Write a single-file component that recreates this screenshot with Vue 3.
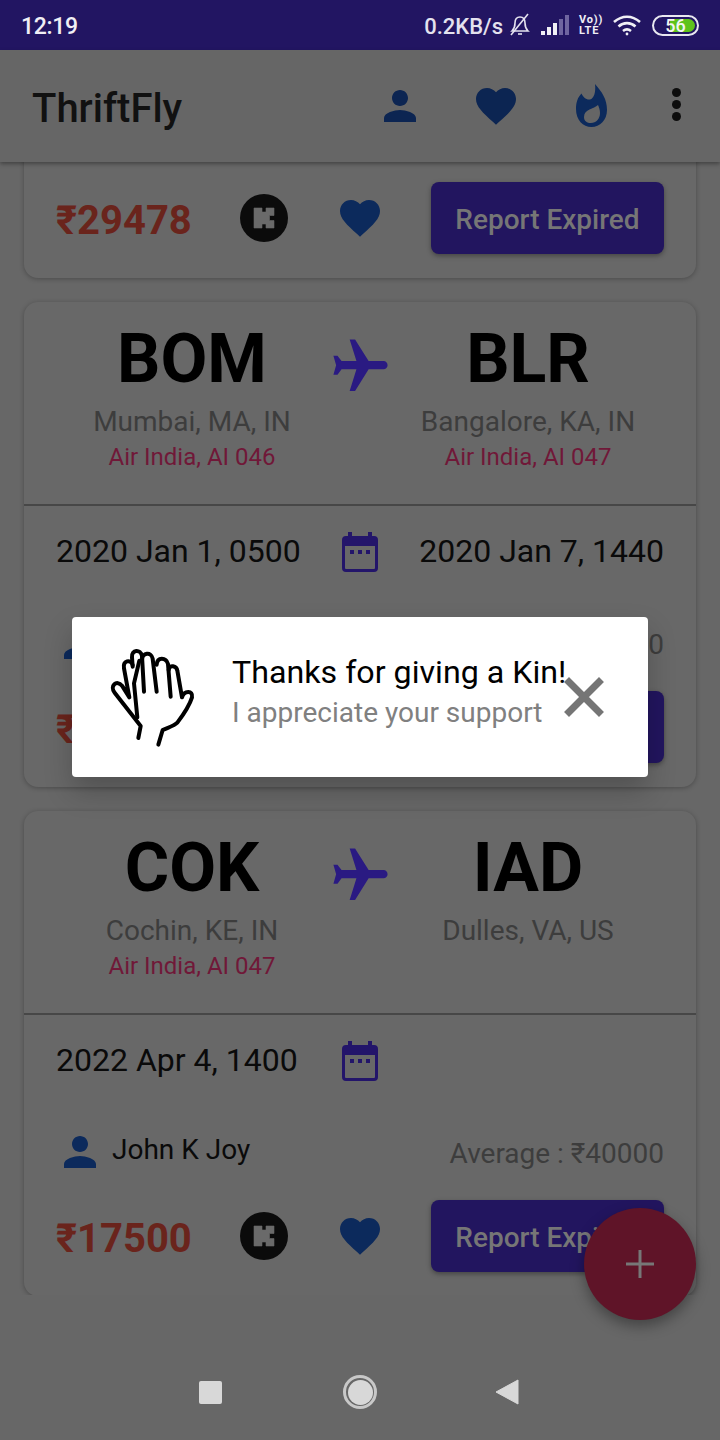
<script setup>
const cards = [
  {
    id: 1,
    short: true,
    price: '₹29478'
  },
  {
    id: 2,
    from: 'BOM',
    to: 'BLR',
    fromCity: 'Mumbai, MA, IN',
    toCity: 'Bangalore, KA, IN',
    fromFlight: 'Air India, AI 046',
    toFlight: 'Air India, AI 047',
    leave: '2020 Jan 1, 0500',
    back: '2020 Jan 7, 1440',
    user: 'John K Joy',
    average: 'Average : ₹40000',
    price: '₹17500'
  },
  {
    id: 3,
    from: 'COK',
    to: 'IAD',
    fromCity: 'Cochin, KE, IN',
    toCity: 'Dulles, VA, US',
    fromFlight: 'Air India, AI 047',
    toFlight: '',
    leave: '2022 Apr 4, 1400',
    back: '',
    user: 'John K Joy',
    average: 'Average : ₹40000',
    price: '₹17500'
  }
]

const personPath = 'M12 12c2.21 0 4-1.79 4-4s-1.79-4-4-4-4 1.79-4 4 1.79 4 4 4zm0 2c-2.67 0-8 1.34-8 4v2h16v-2c0-2.66-5.33-4-8-4z'
const heartPath = 'M12 21.35l-1.45-1.32C5.4 15.36 2 12.28 2 8.5 2 5.42 4.42 3 7.5 3c1.74 0 3.41.81 4.5 2.09C13.09 3.81 14.76 3 16.5 3 19.58 3 22 5.42 22 8.5c0 3.78-3.4 6.86-8.55 11.54L12 21.35z'
const planePath = 'M21 16v-2l-8-5V3.5c0-.83-.67-1.5-1.5-1.5S10 2.67 10 3.5V9l-8 5v2l8-2.5V19l-2 1.5V22l3.5-1 3.5 1v-1.5L13 19v-5.5l8 2.5z'
</script>

<template>
  <div class="screen">
    <div class="status">
      <span class="time">12:19</span>
      <span class="speed">0.2KB/s</span>
      <svg class="bell" width="22" height="24" viewBox="0 0 22 24" fill="none" stroke="#e4e2ee" stroke-width="1.6">
        <path d="M3 18c2-2 3-4 3-8 0-4 2-6 5-6s5 2 5 6c0 4 1 6 3 8z" />
        <path d="M9 21h4" />
        <path d="M2 22 19 1" />
      </svg>
      <svg class="signal" width="28" height="20" viewBox="0 0 28 20">
        <rect x="0" y="16" width="4" height="4" fill="#f0eff5" />
        <rect x="6" y="12" width="4" height="8" fill="#f0eff5" />
        <rect x="12" y="8" width="4" height="12" fill="#f0eff5" />
        <rect x="18" y="4" width="4" height="16" fill="#6f65a0" />
        <rect x="24" y="0" width="4" height="20" fill="#6f65a0" />
      </svg>
      <span class="volte"><span>Vo))</span><span>LTE</span></span>
      <svg class="wifi" width="28" height="21" viewBox="0 0 28 21" fill="none" stroke="#f0eff5" stroke-width="2.6">
        <path d="M1 7c8-7 18-7 26 0" />
        <path d="M5.5 11.5c5-4.5 12-4.5 17 0" />
        <path d="M10 16c2.500-2 5.500-2 8 0" />
        <circle cx="14" cy="19" r="1.400" fill="#f0eff5" stroke="none" />
      </svg>
      <div class="battery">
        <div class="battery-fill"></div>
        <span class="battery-num">56</span>
      </div>
    </div>

    <header class="appbar">
      <h1 class="title">ThriftFly</h1>
      <svg class="bar-person" width="48" height="48" viewBox="0 0 24 24"><path :d="personPath" fill="#0c2552" /></svg>
      <svg class="bar-heart" width="48" height="48" viewBox="0 0 24 24"><path :d="heartPath" fill="#0c2552" /></svg>
      <svg class="bar-flame" width="32" height="43" viewBox="0 0 32 43">
        <path fill="#0c2a5c" fill-rule="evenodd" d="M19 0C26 8 31 15 31 26 31 36 24 43 15.500 43 7 43 0 36 0 25 0 18 2 13 5.500 9.500 7 13 10 16 14 15.500 18 14.500 20 8 19 0ZM22 21C18 25 8 25 8 33 8 37 11 39 15 39 20 39 24 35 24 29 24 26 23 23 22 21Z" />
      </svg>
      <div class="dots"><i></i><i></i><i></i></div>
    </header>

    <main class="list">
      <article v-for="card in cards" :key="card.id" class="card" :class="{ short: card.short }">
        <template v-if="!card.short">
          <section class="route">
            <div class="side from">
              <div class="code">{{ card.from }}</div>
              <div class="city">{{ card.fromCity }}</div>
              <div class="flight">{{ card.fromFlight }}</div>
            </div>
            <div class="side to">
              <div class="code">{{ card.to }}</div>
              <div class="city">{{ card.toCity }}</div>
              <div class="flight">{{ card.toFlight }}</div>
            </div>
            <svg class="plane" width="65" height="65" viewBox="0 0 24 24"><path :d="planePath" fill="#2a1a82" /></svg>
          </section>

          <section class="dates">
            <span class="date">{{ card.leave }}</span>
            <svg class="calendar" width="36" height="40" viewBox="0 0 36 40">
              <rect x="1.500" y="5.500" width="33" height="33" rx="2.500" fill="none" stroke="#23156a" stroke-width="3" />
              <rect x="1" y="5" width="34" height="9" fill="#23156a" />
              <rect x="6" y="0" width="4" height="7" fill="#23156a" />
              <rect x="26" y="0" width="4" height="7" fill="#23156a" />
              <rect x="8" y="18" width="4" height="4" fill="#23156a" />
              <rect x="16" y="18" width="4" height="4" fill="#23156a" />
              <rect x="24" y="18" width="4" height="4" fill="#23156a" />
            </svg>
            <span class="date right">{{ card.back }}</span>
          </section>

          <section class="people">
            <svg width="48" height="48" viewBox="0 0 24 24"><path :d="personPath" fill="#0c2a5c" /></svg>
            <span class="name">{{ card.user }}</span>
            <span class="average">{{ card.average }}</span>
          </section>
        </template>

        <section class="actions">
          <span class="price">{{ card.price }}</span>
          <svg class="kin" width="48" height="48" viewBox="0 0 48 48">
            <circle cx="24" cy="24" r="24" fill="#0b0b0b" />
            <path fill="#6a6a6a" stroke="#6a6a6a" stroke-width=".6" stroke-linejoin="round" d="M14 14h8v4h4v-4h8v7.500h-4.500v5h4.500v7.500h-8v-4h-4v4h-8z" />
          </svg>
          <svg class="like" width="48" height="48" viewBox="0 0 24 24"><path :d="heartPath" fill="#0c2a5c" /></svg>
          <button class="report">Report Expired</button>
        </section>
      </article>
    </main>

    <nav class="navbar">
      <span class="nav-square"></span>
      <span class="nav-circle"><i></i></span>
      <svg width="24" height="26" viewBox="0 0 24 26"><path d="M23 1v24L1 13z" fill="#d8d8d8" stroke="#d8d8d8" stroke-width="1" stroke-linejoin="round" /></svg>
    </nav>

    <button class="fab">
      <svg width="28" height="28" viewBox="0 0 28 28"><path d="M14 0v28M0 14h28" stroke="#777" stroke-width="3" /></svg>
    </button>

    <div class="toast">
      <svg class="hand" width="100" height="110" viewBox="0 0 300 330" fill="none" stroke="#000" stroke-width="12" stroke-linecap="round" stroke-linejoin="round">
        <path d="M115 294 122 258 44 158C28 138 50 118 66 137L88 172 72 85C68 62 92 56 98 75" />
        <path d="M98 80 96 52C94 28 122 26 126 48L132 155" />
        <path d="M126 60C126 38 154 34 158 56L170 155" />
        <path d="M170 74C172 50 198 52 204 72L212 170" />
        <path d="M206 90C208 72 230 78 232 92L246 172C252 152 280 150 276 172 268 198 250 224 232 248 222 258 205 262 188 270L175 314" />
        <path d="M112 232 102 130 118 62" />
      </svg>
      <div class="toast-text">
        <div class="toast-title">Thanks for giving a Kin!</div>
        <div class="toast-sub">I appreciate your support</div>
      </div>
      <svg class="close" width="40" height="40" viewBox="0 0 40 40"><path d="M5 5 35 35M35 5 5 35" stroke="#757575" stroke-width="7" stroke-linecap="square" /></svg>
    </div>
  </div>
</template>

<style>
html, body {
  margin: 0;
  background: #676767;
}
</style>

<style scoped>
.screen {
  position: relative;
  display: flex;
  flex-direction: column;
  width: 720px;
  height: 1440px;
  overflow: hidden;
  background: #676767;
  font-family: Roboto, "Noto Sans", sans-serif;
  color: #000;
}

.status {
  display: flex;
  align-items: center;
  height: 50px;
  flex: none;
  padding: 0 21px;
  box-sizing: border-box;
  background: #221562;
  color: #f0eff5;
}
.time {
  font-size: 23px;
  font-weight: 500;
  letter-spacing: -.3px;
  margin-right: auto;
  margin-top: 2px;
}
.speed {
  font-size: 22px;
  font-weight: 500;
  color: #e4e2ee;
  margin-top: 2px;
}
.bell {
  margin-left: 6px;
}
.signal {
  margin-left: 10px;
}
.volte {
  display: flex;
  flex-direction: column;
  margin-left: 10px;
  width: 24px;
  font-size: 11px;
  line-height: 11px;
  font-weight: 700;
  letter-spacing: .8px;
}
.wifi {
  margin-left: 10px;
}
.battery {
  position: relative;
  width: 47px;
  height: 21px;
  margin-left: 11px;
  box-sizing: border-box;
  border: 2px solid #e8e7f0;
  border-radius: 11px;
  padding: 2px;
}
.battery-fill {
  width: 100%;
  height: 100%;
  background: linear-gradient(90deg, transparent 36%, #5fc31a 36%);
  border-radius: 0 8px 8px 0;
}
.battery-num {
  position: absolute;
  left: 0;
  right: 0;
  top: -2px;
  text-align: center;
  font-size: 18px;
  line-height: 21px;
  font-weight: 500;
  color: #f4f4f4;
}

.appbar {
  position: relative;
  z-index: 2;
  display: flex;
  align-items: center;
  flex: none;
  height: 112px;
  padding-left: 32px;
  box-sizing: border-box;
  background: #666;
  box-shadow: 0 2px 4px rgba(0, 0, 0, .35);
}
.title {
  margin: 4px auto 0 0;
  font-size: 40px;
  font-weight: 500;
  color: #111;
}
.bar-person {
  margin-right: 48px;
}
.bar-heart {
  margin-right: 56px;
}
.bar-flame {
  margin-right: 64px;
  margin-top: -2px;
}
.dots {
  display: flex;
  flex-direction: column;
  gap: 3px;
  margin-right: 39px;
  margin-top: -4px;
}
.dots i {
  display: block;
  width: 9px;
  height: 9px;
  border-radius: 50%;
  background: #0d0d0d;
}

.list {
  height: 1133px;
  flex: none;
  overflow: hidden;
  padding: 0 24px;
  box-sizing: border-box;
}
.card {
  margin-bottom: 24px;
  background: #686868;
  border-radius: 14px;
  box-shadow: 0 1px 5px rgba(0, 0, 0, .28);
}
.card.short {
  margin-top: -20px;
  padding-top: 16px;
}

.route {
  display: grid;
  grid-template-columns: 1fr 1fr;
  align-items: start;
  height: 204px;
  box-sizing: border-box;
  padding-top: 21px;
  border-bottom: 2px solid #474747;
}
.side {
  grid-row: 1;
  min-width: 0;
  text-align: center;
}
.side.from {
  grid-column: 1;
}
.side.to {
  grid-column: 2;
}
.code {
  font-size: 68px;
  line-height: 72px;
  font-weight: 700;
}
.city {
  margin-top: 9px;
  font-size: 28px;
  line-height: 36px;
  color: #3d3d3d;
}
.flight {
  margin-top: 1px;
  font-size: 24px;
  line-height: 32px;
  color: #701838;
}
.plane {
  grid-column: 1 / 3;
  grid-row: 1;
  justify-self: center;
  margin-top: 11px;
  transform: rotate(90deg);
}

.dates {
  display: grid;
  grid-template-columns: 1fr auto 1fr;
  align-items: center;
  padding: 21px 32px 0;
  height: 69px;
  box-sizing: border-box;
}
.calendar {
  margin-top: 2px;
}
.date {
  font-size: 32px;
  line-height: 48px;
  white-space: nowrap;
  color: #0a0a0a;
}
.date.right {
  text-align: right;
}

.people {
  display: flex;
  align-items: center;
  margin-top: 44px;
  padding: 0 32px;
  height: 48px;
}
.name {
  margin: -6px 0 0 8px;
  font-size: 28px;
  color: #0a0a0a;
}
.average {
  margin: 2px 0 0 auto;
  font-size: 28px;
  color: #3d3d3d;
}

.actions {
  display: flex;
  align-items: center;
  padding: 24px 32px 24px;
}
.price {
  width: 184px;
  margin-top: 4px;
  font-size: 40px;
  font-weight: 700;
  color: #6a241c;
  white-space: nowrap;
}
.like {
  margin-left: 48px;
}
.report {
  width: 233px;
  height: 72px;
  margin-left: auto;
  padding: 3px 0 0;
  border: none;
  border-radius: 8px;
  background: #22155f;
  color: #767676;
  font-family: inherit;
  font-size: 28px;
  font-weight: 500;
  box-shadow: 0 2px 5px rgba(0, 0, 0, .35);
}

.navbar {
  flex: 1;
  display: flex;
  align-items: center;
  justify-content: center;
  padding-top: 49px;
  padding-right: 2px;
  box-sizing: border-box;
}
.nav-square {
  width: 23px;
  height: 23px;
  border-radius: 2px;
  background: #d8d8d8;
}
.nav-circle {
  display: flex;
  align-items: center;
  justify-content: center;
  width: 34px;
  height: 34px;
  margin: 0 118px 0 121px;
  box-sizing: border-box;
  border: 3px solid #c8c8c8;
  border-radius: 50%;
}
.nav-circle i {
  display: block;
  width: 25px;
  height: 25px;
  border-radius: 50%;
  background: #d8d8d8;
}

.fab {
  position: absolute;
  left: 584px;
  top: 1208px;
  display: flex;
  align-items: center;
  justify-content: center;
  width: 112px;
  height: 112px;
  padding: 0;
  border: none;
  border-radius: 50%;
  background: #5f1428;
  box-shadow: 0 6px 14px rgba(0, 0, 0, .35);
}

.toast {
  position: absolute;
  left: 72px;
  top: 617px;
  z-index: 3;
  display: flex;
  align-items: center;
  width: 576px;
  height: 160px;
  background: #fff;
  border-radius: 4px;
  box-shadow: 0 14px 28px rgba(0, 0, 0, .22);
}
.hand {
  flex: none;
  margin: -4px 32px 0 28px;
}
.toast-text {
  flex: none;
  width: 332px;
  margin-top: -10px;
  white-space: nowrap;
}
.toast-title {
  font-size: 32.2px;
  line-height: 42px;
}
.toast-sub {
  font-size: 28px;
  line-height: 40px;
  color: #808080;
}
</style>
